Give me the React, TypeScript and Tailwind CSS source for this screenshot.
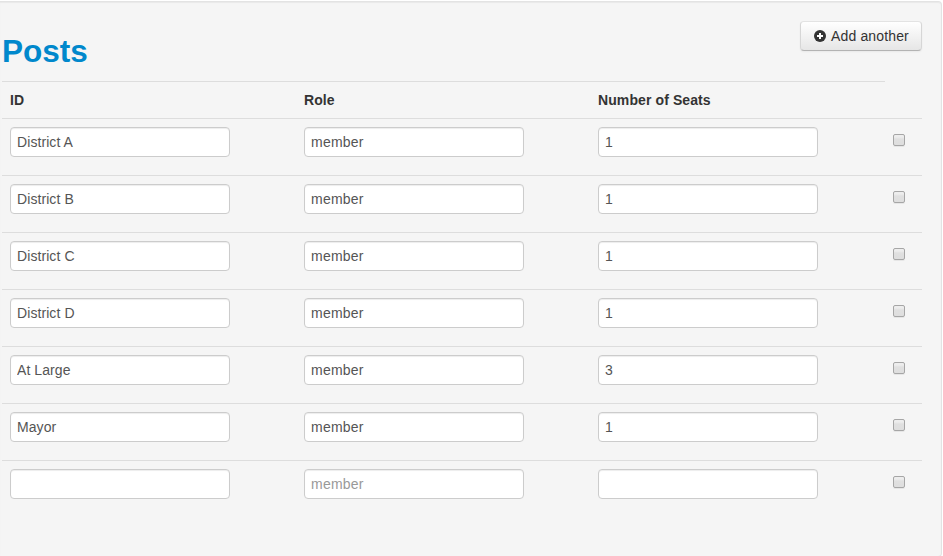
const rows = [
  ['District A', 'member', '1'],
  ['District B', 'member', '1'],
  ['District C', 'member', '1'],
  ['District D', 'member', '1'],
  ['At Large', 'member', '3'],
  ['Mayor', 'member', '1'],
  ['', '', ''],
];

function Field({ value, placeholder }: { value: string; placeholder?: string }) {
  return (
    <input
      type="text"
      defaultValue={value}
      placeholder={placeholder}
      className={`block h-[30px] w-[220px] rounded border border-[#cccccc] bg-white px-1.5 text-sm leading-5 text-[#555555] shadow-[inset_0_1px_1px_rgba(0,0,0,0.075)] placeholder:text-[#999999] placeholder:opacity-100 ${placeholder ? 'tracking-[0.22px]' : 'tracking-[0.08px]'}`}
    />
  );
}

export default function App() {
  return (
    <div className="h-[556px] w-[943px] overflow-hidden bg-white pt-px font-['Liberation_Sans',Arial,sans-serif] text-sm leading-5 text-[#333333]">
      <div className="h-[556px] w-[942px] rounded-r border-y border-r border-[#e3e3e3] bg-[#f5f5f5] pr-[19px] pl-0.5 shadow-[inset_0_1px_1px_rgba(0,0,0,0.05)]">
        <div className="flex h-[79px] items-start justify-between pt-[19px]">
          <h1 className="pt-[10px] text-[31.5px] leading-10 font-bold text-[#0088cc]">Posts</h1>
          <button className="flex h-[30px] w-[122px] items-center rounded border border-[#d6d6d6] border-t-[#e3e3e3] border-b-[#b3b3b3] bg-linear-to-b from-white to-[#e6e6e6] pl-[13px] tracking-[0.15px] shadow-[inset_0_1px_0_rgba(255,255,255,0.2),0_1px_2px_rgba(0,0,0,0.05)]">
            <svg className="mr-[5px] size-3" viewBox="0 0 12 12">
              <circle cx="6" cy="6" r="6" fill="#333333" />
              <path d="M5 3h2v2h2v2H7v2H5V7H3V5h2z" fill="#ffffff" />
            </svg>
            Add another
          </button>
        </div>
        <div className="grid h-[37px] w-[883px] grid-cols-[294px_294px_295px] border-t border-[#dddddd] pt-2 font-bold tracking-[0.1px]">
          <div className="pl-2">ID</div>
          <div className="pl-2">Role</div>
          <div className="pl-2">Number of Seats</div>
        </div>
        {rows.map(([id, role, seats], index) => (
          <div key={index} className="grid h-[57px] grid-cols-[294px_294px_295px_37px] border-t border-[#dddddd] pt-2">
            <div className="pl-2"><Field value={id} /></div>
            <div className="pl-2"><Field value={role} placeholder="member" /></div>
            <div className="pl-2"><Field value={seats} /></div>
            <div className="pt-[7px] pl-2">
              <input
                type="checkbox"
                className="block h-3 w-3 appearance-none rounded-[2px] border border-[#a6a6a6] bg-linear-to-b from-[#ededed] from-20% via-[#e0e0e0] via-40% to-[#dedede] shadow-[0_1px_0_#e6e6e6]"
              />
            </div>
          </div>
        ))}
      </div>
    </div>
  );
}
